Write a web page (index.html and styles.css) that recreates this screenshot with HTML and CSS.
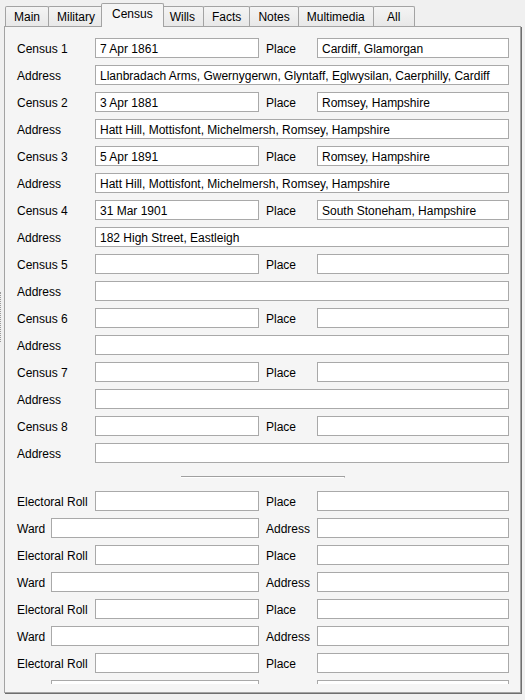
FILE: index.html
```html
<!DOCTYPE html>
<html lang="en">
<head>
    <meta charset="UTF-8">
    <meta name="viewport" content="width=device-width, initial-scale=1.0">
    <title>Census</title>
    <link rel="stylesheet" href="styles.css">
</head>
<body>
    <div class="window">
        <!-- splitter grip on the left edge -->
        <div class="grip"><div class="grip-dots"></div></div>

        <div class="tab-control">
            <div class="tabstrip">
                <div class="tab">Main</div>
                <div class="tab">Military</div>
                <div class="tab selected">Census</div>
                <div class="tab">Wills</div>
                <div class="tab">Facts</div>
                <div class="tab">Notes</div>
                <div class="tab">Multimedia</div>
                <div class="tab">All</div>
            </div>

            <div class="page">
                <div class="scroller">
                    <!-- Census entries -->
                    <div class="row">
                        <label class="lbl">Census 1</label>
                        <input class="field short" type="text" value="7 Apr 1861">
                        <label class="lbl2">Place</label>
                        <input class="field place" type="text" value="Cardiff, Glamorgan">
                    </div>
                    <div class="row">
                        <label class="lbl">Address</label>
                        <input class="field wide" type="text" value="Llanbradach Arms, Gwernygerwn, Glyntaff, Eglwysilan, Caerphilly, Cardiff">
                    </div>
                    <div class="row">
                        <label class="lbl">Census 2</label>
                        <input class="field short" type="text" value="3 Apr 1881">
                        <label class="lbl2">Place</label>
                        <input class="field place" type="text" value="Romsey, Hampshire">
                    </div>
                    <div class="row">
                        <label class="lbl">Address</label>
                        <input class="field wide" type="text" value="Hatt Hill, Mottisfont, Michelmersh, Romsey, Hampshire">
                    </div>
                    <div class="row">
                        <label class="lbl">Census 3</label>
                        <input class="field short" type="text" value="5 Apr 1891">
                        <label class="lbl2">Place</label>
                        <input class="field place" type="text" value="Romsey, Hampshire">
                    </div>
                    <div class="row">
                        <label class="lbl">Address</label>
                        <input class="field wide" type="text" value="Hatt Hill, Mottisfont, Michelmersh, Romsey, Hampshire">
                    </div>
                    <div class="row">
                        <label class="lbl">Census 4</label>
                        <input class="field short" type="text" value="31 Mar 1901">
                        <label class="lbl2">Place</label>
                        <input class="field place" type="text" value="South Stoneham, Hampshire">
                    </div>
                    <div class="row">
                        <label class="lbl">Address</label>
                        <input class="field wide" type="text" value="182 High Street, Eastleigh">
                    </div>
                    <div class="row">
                        <label class="lbl">Census 5</label>
                        <input class="field short" type="text">
                        <label class="lbl2">Place</label>
                        <input class="field place" type="text">
                    </div>
                    <div class="row">
                        <label class="lbl">Address</label>
                        <input class="field wide" type="text">
                    </div>
                    <div class="row">
                        <label class="lbl">Census 6</label>
                        <input class="field short" type="text">
                        <label class="lbl2">Place</label>
                        <input class="field place" type="text">
                    </div>
                    <div class="row">
                        <label class="lbl">Address</label>
                        <input class="field wide" type="text">
                    </div>
                    <div class="row">
                        <label class="lbl">Census 7</label>
                        <input class="field short" type="text">
                        <label class="lbl2">Place</label>
                        <input class="field place" type="text">
                    </div>
                    <div class="row">
                        <label class="lbl">Address</label>
                        <input class="field wide" type="text">
                    </div>
                    <div class="row">
                        <label class="lbl">Census 8</label>
                        <input class="field short" type="text">
                        <label class="lbl2">Place</label>
                        <input class="field place" type="text">
                    </div>
                    <div class="row">
                        <label class="lbl">Address</label>
                        <input class="field wide" type="text">
                    </div>

                    <div class="separator"></div>

                    <!-- Electoral roll entries -->
                    <div class="row">
                        <label class="lbl">Electoral Roll</label>
                        <input class="field short" type="text">
                        <label class="lbl2">Place</label>
                        <input class="field place" type="text">
                    </div>
                    <div class="row">
                        <label class="lbl ward">Ward</label>
                        <input class="field ward-box" type="text">
                        <label class="lbl2">Address</label>
                        <input class="field place" type="text">
                    </div>
                    <div class="row">
                        <label class="lbl">Electoral Roll</label>
                        <input class="field short" type="text">
                        <label class="lbl2">Place</label>
                        <input class="field place" type="text">
                    </div>
                    <div class="row">
                        <label class="lbl ward">Ward</label>
                        <input class="field ward-box" type="text">
                        <label class="lbl2">Address</label>
                        <input class="field place" type="text">
                    </div>
                    <div class="row">
                        <label class="lbl">Electoral Roll</label>
                        <input class="field short" type="text">
                        <label class="lbl2">Place</label>
                        <input class="field place" type="text">
                    </div>
                    <div class="row">
                        <label class="lbl ward">Ward</label>
                        <input class="field ward-box" type="text">
                        <label class="lbl2">Address</label>
                        <input class="field place" type="text">
                    </div>
                    <div class="row">
                        <label class="lbl">Electoral Roll</label>
                        <input class="field short" type="text">
                        <label class="lbl2">Place</label>
                        <input class="field place" type="text">
                    </div>
                    <div class="row">
                        <label class="lbl ward">Ward</label>
                        <input class="field ward-box" type="text">
                        <label class="lbl2">Address</label>
                        <input class="field place" type="text">
                    </div>
                </div>
            </div>
        </div>
    </div>
</body>
</html>
```

FILE: styles.css
```css
body {
    margin: 0;
    padding: 0;
    background: #f0f0f0;
    font-family: "Liberation Sans", Arial, sans-serif;
    font-size: 12px;
    color: #000;
    overflow: hidden;
}

.window {
    display: flex;
    height: 700px;
}

.grip {
    width: 4px;
    flex: none;
}

.grip-dots {
    margin-top: 292px;
    height: 50px;
    border-left: 1px dotted #9a9a9a;
}

.tab-control {
    width: 517px;
    display: flex;
    flex-direction: column;
}

/* Tab headers */
.tabstrip {
    height: 26px;
    display: flex;
    align-items: flex-end;
    padding-left: 1px;
    position: relative;
    z-index: 1;
}

.tab {
    height: 20px;
    box-sizing: border-box;
    min-width: 42px;
    padding: 0 8px;
    margin-right: -1px;
    border: 1px solid #a3a3a3;
    border-bottom: none;
    border-radius: 2px 2px 0 0;
    background: linear-gradient(#f4f4f4, #e8e8e8);
    line-height: 21px;
    text-align: center;
    white-space: nowrap;
}

.tab.selected {
    height: 24px;
    margin: 0 -3px -1px -2px;
    padding: 0 10px;
    background: #f5f5f5;
    line-height: 20px;
    position: relative;
    z-index: 2;
}

/* Tab page */
.page {
    height: 667px;
    box-sizing: border-box;
    border: 1px solid #a3a3a3;
    box-shadow: 1px 1px 0 #6e6e6e;
    background: #f5f5f5;
    padding-bottom: 7px;
}

.scroller {
    height: 657px;
    overflow: hidden;
    padding: 11px 0 0 12px;
    box-sizing: border-box;
}

.row {
    display: flex;
    align-items: center;
    height: 20px;
    margin-bottom: 7px;
}

.lbl {
    width: 78px;
    padding-top: 2px;
    flex: none;
    white-space: nowrap;
}

.lbl.ward {
    width: 34px;
}

.lbl2 {
    width: 51px;
    margin-left: 7px;
    padding-top: 2px;
    flex: none;
    white-space: nowrap;
}

.field {
    height: 20px;
    box-sizing: border-box;
    margin: 0;
    padding: 2px 4px 0;
    border: 1px solid #a9a9a9;
    border-radius: 0;
    background: #fff;
    font: inherit;
    color: #000;
    outline: none;
    flex: none;
}

.field.short {
    width: 164px;
}

.field.ward-box {
    width: 208px;
}

.field.place {
    width: 192px;
}

.field.wide {
    width: 414px;
}

/* etched divider between census and electoral roll */
.separator {
    width: 163px;
    height: 0;
    margin: 13px 0 13px 164px;
    border-top: 1px solid #a0a0a0;
    border-bottom: 1px solid #ffffff;
    border-right: 1px solid #a0a0a0;
}
```
